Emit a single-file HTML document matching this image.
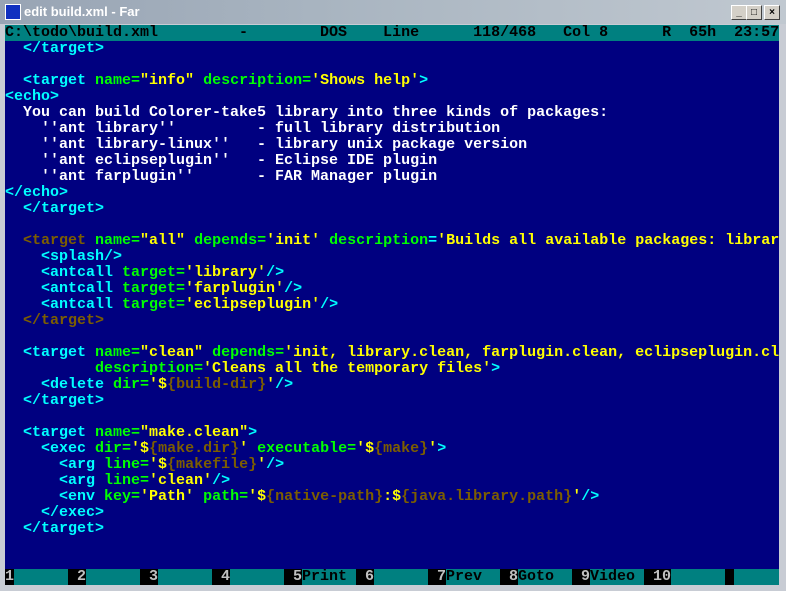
<!DOCTYPE html>
<html><head><meta charset="utf-8"><style>
html,body{margin:0;padding:0;width:786px;height:591px;overflow:hidden;background:#d4d0c8;}
#win{position:absolute;left:0;top:0;width:786px;height:591px;background:#c8ccd4;}
#title{position:absolute;left:0;top:0;width:786px;height:24px;background:linear-gradient(90deg,#98a4b4 0%,#a8b4c0 40%,#c0c8d0 100%);}
#title .t{position:absolute;left:24px;top:4px;font:bold 13px "Liberation Sans",sans-serif;color:#fff;}
#icon{position:absolute;left:5px;top:4px;width:14px;height:14px;background:#1030c0;border:1px solid #fff;}
.btn{position:absolute;top:5px;width:14px;height:13px;background:#d4d0c8;border:1px solid;border-color:#fff #404040 #404040 #fff;font:bold 10px "Liberation Sans",sans-serif;text-align:center;line-height:13px;color:#000;}
#scr{position:absolute;left:5px;top:25px;width:774px;height:560px;background:#000080;overflow:hidden;
font:bold 15px/16px "Liberation Mono",monospace;}
.row{height:16px;overflow:hidden;width:774px;white-space:pre;}
#st{background:#008080;color:#000;}
#kb{position:absolute;left:0;top:544px;height:16px;width:774px;background:#008080;white-space:pre;}
#kb span{position:absolute;top:0;height:16px;}
.k{background:#000;color:#c0c0c0;}
.l{color:#000;}
.c{color:#00ffff}.g{color:#00ff00}.y{color:#ffff00}.w{color:#ffffff}.d{color:#7c5e00}
</style></head><body><div id="win">
<div id="title"><div id="icon"></div><div class="t">edit build.xml - Far</div>
<div class="btn" style="left:731px">_</div><div class="btn" style="left:746px">□</div><div class="btn" style="left:764px">×</div></div>
<div id="scr"><div class="row" id="st">C:\todo\build.xml         -        DOS    Line      118/468   Col 8      R  65h  23:57</div><div class="row">  <span class="c">&lt;/target&gt;</span></div><div class="row"> </div><div class="row">  <span class="c">&lt;target </span><span class="g">name=</span><span class="y">"info"</span> <span class="g">description=</span><span class="y">'Shows help'</span><span class="c">&gt;</span></div><div class="row"><span class="c">&lt;echo&gt;</span></div><div class="row w">  You can build Colorer-take5 library into three kinds of packages:</div><div class="row w">    ''ant library''         - full library distribution</div><div class="row w">    ''ant library-linux''   - library unix package version</div><div class="row w">    ''ant eclipseplugin''   - Eclipse IDE plugin</div><div class="row w">    ''ant farplugin''       - FAR Manager plugin</div><div class="row"><span class="c">&lt;/echo&gt;</span></div><div class="row">  <span class="c">&lt;/target&gt;</span></div><div class="row"> </div><div class="row">  <span class="d">&lt;target </span><span class="g">name=</span><span class="y">"all"</span> <span class="g">depends=</span><span class="y">'init'</span> <span class="g">description</span><span class="c">=</span><span class="y">'Builds all available packages: librar</span></div><div class="row">    <span class="c">&lt;splash/&gt;</span></div><div class="row">    <span class="c">&lt;antcall </span><span class="g">target=</span><span class="y">'library'</span><span class="c">/&gt;</span></div><div class="row">    <span class="c">&lt;antcall </span><span class="g">target=</span><span class="y">'farplugin'</span><span class="c">/&gt;</span></div><div class="row">    <span class="c">&lt;antcall </span><span class="g">target=</span><span class="y">'eclipseplugin'</span><span class="c">/&gt;</span></div><div class="row">  <span class="d">&lt;/target&gt;</span></div><div class="row"> </div><div class="row">  <span class="c">&lt;target </span><span class="g">name=</span><span class="y">"clean"</span> <span class="g">depends=</span><span class="y">'init, library.clean, farplugin.clean, eclipseplugin.cl</span></div><div class="row">          <span class="g">description=</span><span class="y">'Cleans all the temporary files'</span><span class="c">&gt;</span></div><div class="row">    <span class="c">&lt;delete </span><span class="g">dir=</span><span class="y">'$</span><span class="d">{build-dir}</span><span class="y">'</span><span class="c">/&gt;</span></div><div class="row">  <span class="c">&lt;/target&gt;</span></div><div class="row"> </div><div class="row">  <span class="c">&lt;target </span><span class="g">name=</span><span class="y">"make.clean"</span><span class="c">&gt;</span></div><div class="row">    <span class="c">&lt;exec </span><span class="g">dir=</span><span class="y">'$</span><span class="d">{make.dir}</span><span class="y">'</span> <span class="g">executable=</span><span class="y">'$</span><span class="d">{make}</span><span class="y">'</span><span class="c">&gt;</span></div><div class="row">      <span class="c">&lt;arg </span><span class="g">line=</span><span class="y">'$</span><span class="d">{makefile}</span><span class="y">'</span><span class="c">/&gt;</span></div><div class="row">      <span class="c">&lt;arg </span><span class="g">line=</span><span class="y">'clean'</span><span class="c">/&gt;</span></div><div class="row">      <span class="c">&lt;env </span><span class="g">key=</span><span class="y">'Path'</span> <span class="g">path=</span><span class="y">'$</span><span class="d">{native-path}</span><span class="y">:$</span><span class="d">{java.library.path}</span><span class="y">'</span><span class="c">/&gt;</span></div><div class="row">    <span class="c">&lt;/exec&gt;</span></div><div class="row">  <span class="c">&lt;/target&gt;</span></div><div id="kb"><span class="k" style="left:0">1</span><span class="k" style="left:63px"> 2</span><span class="k" style="left:135px"> 3</span><span class="k" style="left:207px"> 4</span><span class="k" style="left:279px"> 5</span><span class="l" style="left:297px">Print</span><span class="k" style="left:351px"> 6</span><span class="k" style="left:423px"> 7</span><span class="l" style="left:441px">Prev</span><span class="k" style="left:495px"> 8</span><span class="l" style="left:513px">Goto</span><span class="k" style="left:567px"> 9</span><span class="l" style="left:585px">Video</span><span class="k" style="left:639px"> 10</span><span class="k" style="left:720px"> </span></div></div>
</div></body></html>
